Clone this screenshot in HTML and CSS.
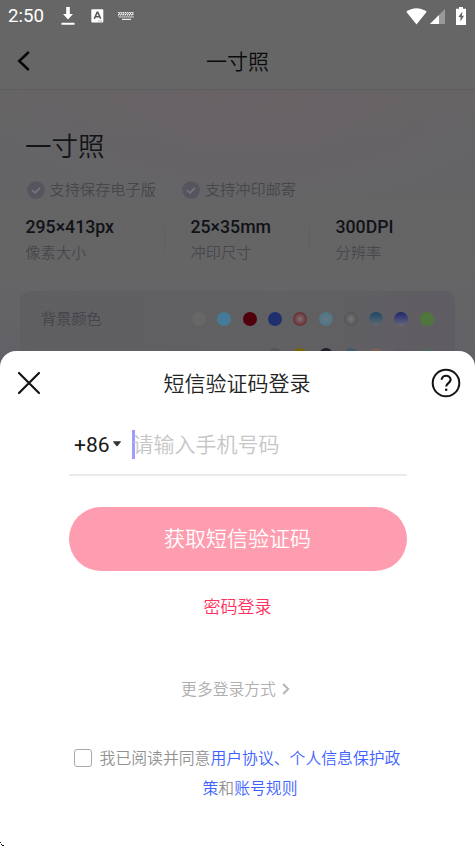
FILE: index.html
```html
<!DOCTYPE html>
<html lang="zh-CN">
<head>
<meta charset="utf-8">
<meta name="viewport" content="width=device-width, initial-scale=1">
<title>一寸照</title>
<link rel="stylesheet" href="styles.css">
</head>
<body>
<div class="screen">
  <header class="status">
    <span class="time">2:50</span>
    <svg class="s-download" width="14" height="18" viewBox="0 0 14 18" fill="#fff"><path d="M5.2 0h3.6v7H12l-5 5.5L2 7h3.2zM.5 15.8h13v1.9H.5z"/></svg>
    <svg class="s-lang" width="13" height="14" viewBox="0 0 13 14"><rect x=".3" y=".2" width="12" height="13.4" rx="1" fill="#fff"/><path d="M3.3 9.8 6.2 3.2h.6l2.9 6.6M4.4 7.8h4.2" fill="none" stroke="#555" stroke-width="1.6"/><path d="M7 12h4" stroke="#aaa" stroke-width=".8"/></svg>
    <svg class="s-keys" width="17" height="9" viewBox="0 0 17 9" fill="none" stroke="#ededed"><path d="M0 .5h16M0 2.5h16M1 5h15" stroke-width="1.2" stroke-dasharray="1.6 .6"/><path d="M1 1.5h15M0 3.8h15" stroke-width="1" stroke-dasharray="1 1.2"/><path d="M4 7.4h9" stroke-width="1.2"/></svg>
    <span class="grow"></span>
    <svg class="s-wifi" width="21" height="17" viewBox="0 0 21 17"><path d="M.3 3.8C6-1 15-1 20.7 3.8L10.5 16.6z" fill="#fff"/></svg>
    <svg class="s-signal" width="15" height="15" viewBox="0 0 15 15"><path d="M15 0v15H0z" fill="#999"/><path d="M9 6v9H0z" fill="#fff"/></svg>
    <svg width="10" height="18" viewBox="0 0 10 18"><path d="M3 0h4v1.7h3V18H0V1.7h3z" fill="#fff"/><path d="M6.4 4.5 2.3 10h2.2v4.6L8 8.8H5.9z" fill="#666"/></svg>
  </header>
  <nav class="nav">
    <svg class="back" width="14" height="22" viewBox="0 0 14 22"><path d="M11.8 2 2.2 11l9.6 9" fill="none" stroke="#080808" stroke-width="2.5"/></svg>
    <span class="nav-title">一寸照</span>
  </nav>
  <main class="content">
    <h1>一寸照</h1>
    <div class="features">
      <span class="feature"><svg width="18" height="18" viewBox="0 0 18 18"><circle cx="9" cy="9" r="8.8" fill="#56545f"/><path d="m5 9 3 2.8 5-5" fill="none" stroke="#77757d" stroke-width="1.7"/></svg>支持保存电子版</span>
      <span class="feature"><svg width="18" height="18" viewBox="0 0 18 18"><circle cx="9" cy="9" r="8.8" fill="#56545f"/><path d="m5 9 3 2.8 5-5" fill="none" stroke="#77757d" stroke-width="1.7"/></svg>支持冲印邮寄</span>
    </div>
    <div class="specs">
      <div class="spec"><b>295×413px</b><span>像素大小</span></div>
      <div class="spec"><b>25×35mm</b><span>冲印尺寸</span></div>
      <div class="spec"><b>300DPI</b><span>分辨率</span></div>
    </div>
    <section class="card">
      <span class="card-label">背景颜色</span>
      <div class="dots">
        <i class="dot white"></i><i class="dot sky"></i><i class="dot red"></i><i class="dot blue"></i><i class="dot red-glow"></i><i class="dot sky-glow"></i><i class="dot gray-glow"></i><i class="dot teal-fade"></i><i class="dot blue-fade"></i><i class="dot green"></i>
        <i class="dot silver"></i><i class="dot yellow"></i><i class="dot navy"></i><i class="dot steel"></i><i class="dot peach"></i><i class="dot lilac"></i><i class="dot mint"></i>
      </div>
    </section>
  </main>
  <section class="sheet">
    <header class="sheet-head">
      <svg width="24" height="24" viewBox="0 0 24 24"><path d="m2 2 20 20M22 2 2 22" stroke="#141414" stroke-width="2.2" stroke-linecap="round"/></svg>
      <h2>短信验证码登录</h2>
      <svg width="30" height="30" viewBox="0 0 30 30" fill="none" stroke="#141414" stroke-width="2"><circle cx="15" cy="15" r="13.3"/><path d="M10.7 11.8c0-5.4 8.9-5.4 8.9 0 0 3.2-4.4 3.3-4.4 6.6" stroke-width="2.2"/><path d="M15.2 20.6v2.3" stroke-width="2.2"/></svg>
    </header>
    <div class="form">
      <div class="phone">
        <span class="code">+86</span>
        <svg class="caret-down" width="8" height="6" viewBox="0 0 8 6"><path d="M.5.3h7a.4.4 0 0 1 .3.7L4.6 5a.8.8 0 0 1-1.2 0L.2 1A.4.4 0 0 1 .5.3z" fill="#333"/></svg>
        <i class="cursor"></i>
        <span class="placeholder">请输入手机号码</span>
      </div>
      <div class="submit">获取短信验证码</div>
      <div class="password">密码登录</div>
      <div class="more">更多登录方式<svg width="8" height="12" viewBox="0 0 8 12"><path d="m1.2 1 5 5-5 5" fill="none" stroke="#b5b5b5" stroke-width="2"/></svg></div>
      <div class="agree"><i class="check"></i><p>我已阅读并同意<a>用户协议、个人信息保护政策</a>和<a>账号规则</a></p></div>
    </div>
    <svg class="corner" width="4" height="4" viewBox="0 0 4 4"><path d="M0 0h1v1H0zM1 2h1v1H1zM2 3h2v1H2z" fill="#111"/></svg>
  </section>
</div>
</body>
</html>
```
FILE: styles.css
```css
* { box-sizing: border-box; }
body { margin: 0; font-family: Roboto, "Noto Sans CJK SC", sans-serif; font-weight: 350; }
h1, h2, p { margin: 0; font-weight: inherit; }
svg { display: block; flex: none; }
.screen { position: relative; width: 475px; height: 846px; overflow: hidden; background: #666; }

.status { display: flex; align-items: center; height: 32px; padding: 0 9px 0 8px; }
.time { width: 53px; color: #fff; font-size: 18.7px; font-weight: 400; line-height: 32px; }
.s-lang { margin-left: 16px; }
.s-keys { margin-left: 14px; }
.s-wifi { margin-right: 3px; }
.s-signal { margin-right: 11px; }
.grow { flex: 1; }

.nav { display: grid; grid-template-columns: 40px 1fr 40px; align-items: center; height: 58px; padding: 1px 0 0; border-bottom: 1px solid #5d5d5d; }
.back { margin-left: 17px; }
.nav-title { padding-top: 1px; text-align: center; font-size: 21px; line-height: 30px; color: #0b0b0b; }

.content { height: 756px; padding: 37px 20px 0; background: radial-gradient(ellipse 280px 130px at 250px 0, #696266, #69626600), linear-gradient(#666566, #646466 60px, #656566 180px, #626166 270px); }
h1 { padding-left: 5px; font-size: 26.5px; line-height: 40px; color: #131417; }
.features { display: flex; gap: 26px; height: 24px; margin-top: 10.5px; padding-left: 6.6px; }
.feature { display: flex; align-items: center; gap: 5px; font-size: 15.2px; line-height: 24px; color: #46464d; }
.specs { display: flex; margin-top: 13.5px; padding-left: 5.5px; }
.spec { position: relative; flex: none; width: 165px; }
.spec + .spec { width: 145px; }
.spec b { display: block; font-size: 17.7px; font-weight: 500; line-height: 24px; color: #111216; }
.spec span { display: block; font-size: 15.2px; line-height: 28px; color: #47474c; }
.spec:not(:last-child)::after { content: ""; position: absolute; right: 26px; top: 12px; width: 1px; height: 25px; background: #5e5e64; }

.card { display: flex; justify-content: space-between; height: 180px; margin-top: 24px; padding: 14px 21.3px 0 21px; border-radius: 10px; background: linear-gradient(90deg, #5f5f62, #616062 60%, #5f5d63); }
.card-label { padding-top: 1px; font-size: 15.2px; line-height: 26px; color: #43434a; }
.dots { display: grid; grid-template-columns: repeat(10, 14px); grid-auto-rows: 14px; gap: 22px 11.3px; padding-top: 7px; }
.dot { width: 14px; height: 14px; border-radius: 50%; }
.white { background: #676767; }
.sky { background: #457b9a; }
.red { background: #50000c; }
.blue { background: #20306f; }
.red-glow { background: radial-gradient(#807175, #682e31 70%); }
.sky-glow { background: radial-gradient(#677984, #507587 70%); }
.gray-glow { background: radial-gradient(#777, #545454 70%); }
.teal-fade { background: linear-gradient(#204866, #3e596c 50%, #666970); }
.blue-fade { background: linear-gradient(#1c2766, #414777 50%, #6a6973); }
.green { background: #50753d; }
.silver { grid-column: 4; background: #54565e; }
.yellow { background: #7a6504; }
.navy { background: #1b1f2e; }
.steel { background: #425a70; }
.peach { background: #796058; }
.lilac { background: #625768; }
.mint { background: #526762; }

.sheet { position: absolute; left: 0; right: 0; bottom: 0; height: 495px; border-radius: 16px 16px 0 0; background: #fff; }
.sheet-head { display: flex; align-items: center; justify-content: space-between; height: 63px; padding: 0 14px 0 17px; }
h2 { padding: 2px 0 0 2px; font-size: 21px; line-height: 32px; color: #222; }
.form { width: 338px; margin: 0 auto; }
.phone { display: flex; align-items: center; height: 62px; padding-left: 5.5px; border-bottom: 2px solid #ebebeb; }
.code { width: 38.5px; padding-top: 1px; font-size: 21px; line-height: 30px; font-weight: 400; color: #181818; }
.cursor { width: 3px; height: 29px; margin-left: 11px; background: #9f9cff; }
.placeholder { margin-left: -2px; padding-top: 2px; font-size: 21px; line-height: 30px; color: #c6c6c6; }
.submit { height: 64px; margin-top: 31px; border-radius: 32px; background: #ff9db0; color: #fff; text-align: center; font-size: 21px; line-height: 65px; }
.password { margin-top: 22px; text-align: center; font-size: 17px; line-height: 28px; color: #ff315e; }
.more { display: flex; align-items: center; justify-content: center; gap: 6px; margin-top: 55px; padding-right: 4px; font-size: 15.8px; line-height: 28px; color: #afafaf; }
.more svg { margin-bottom: 2px; }
.agree { display: flex; margin-top: 40px; padding-left: 5px; }
.check { flex: none; width: 18px; height: 18px; margin: 5px 7px 0 0; border: 1px solid #aaa; border-radius: 3px; }
.agree p { width: 303px; text-align: center; font-size: 15.84px; line-height: 30px; color: #929292; }
.agree a { color: #3d62ff; }
.corner { position: absolute; left: 0; bottom: 0; }
```
